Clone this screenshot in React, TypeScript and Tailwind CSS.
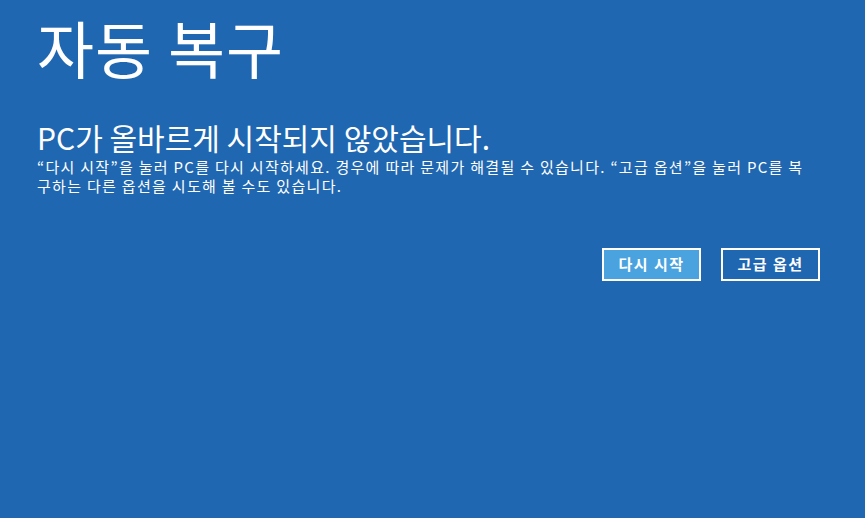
export default function App() {
  return (
    <div
      className="w-[865px] h-[518px] bg-[#1f67b1] text-white overflow-hidden"
      style={{ fontFamily: '"Noto Sans CJK KR", "Noto Sans", sans-serif' }}
    >
      <div className="pl-[37px] pr-[45px] pt-[4px]">
        <h1 className="text-[62px] leading-[86px] font-normal tracking-[1px]">자동 복구</h1>
        <h2 className="mt-[29px] text-[30px] leading-[36px] font-normal">PC가 올바르게 시작되지 않았습니다.</h2>
        <p className="mt-[2px] text-[15px] leading-[19px] tracking-[1.3px] w-[772px]">
          “다시 시작”을 눌러 PC를 다시 시작하세요. 경우에 따라 문제가 해결될 수 있습니다. “고급 옵션”을 눌러 PC를 복구하는 다른 옵션을 시도해 볼 수도 있습니다.
        </p>
        <div className="mt-[53px] flex justify-end gap-[20px]">
          <button className="w-[99px] h-[33px] border-2 border-white bg-[#4aa3df] text-[15px] font-bold tracking-[1.5px]">다시 시작</button>
          <button className="w-[99px] h-[33px] border-2 border-white bg-[#1f67b1] text-[15px] font-bold tracking-[1.5px]">고급 옵션</button>
        </div>
      </div>
    </div>
  )
}
